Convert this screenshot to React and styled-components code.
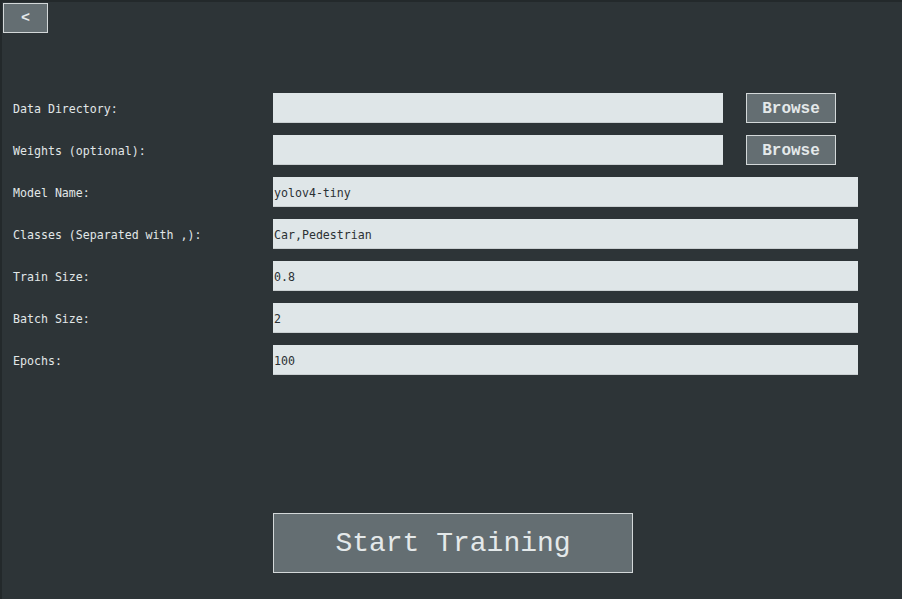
import React from 'react';
import styled, { createGlobalStyle } from 'styled-components';

const GlobalStyle = createGlobalStyle`
  html, body {
    margin: 0;
    padding: 0;
    background: #2d3437;
  }
  * { box-sizing: border-box; }
`;

const Window = styled.div`
  width: 902px;
  height: 599px;
  background: #2d3437;
  border-top: 2px solid #23292b;
  border-left: 2px solid #23292b;
  display: flex;
  flex-direction: column;
  font-family: "DejaVu Sans Mono", "Liberation Mono", monospace;
  overflow: hidden;
`;

const TopBar = styled.div`
  display: flex;
  padding: 1px 0 0 1px;
`;

const BackButton = styled.button`
  width: 45px;
  height: 30px;
  margin: 0;
  padding: 0;
  background: #646e72;
  border: 1px solid #d3d8d9;
  color: #e4e9ea;
  font-family: "Liberation Mono", monospace;
  font-weight: bold;
  font-size: 15px;
  cursor: pointer;
`;

const Form = styled.div`
  display: flex;
  flex-direction: column;
  gap: 12px;
  margin-top: 60px;
  padding-left: 11px;
`;

const Row = styled.div`
  display: flex;
  align-items: center;
  height: 30px;
`;

const Label = styled.label`
  width: 260px;
  padding-top: 2px;
  color: #e2e7e8;
  font-size: 11.6px;
  white-space: nowrap;
`;

const Entry = styled.input`
  width: ${p => p.$width}px;
  height: 30px;
  margin: 0;
  padding: 2px 0 0 1px;
  background: #dfe6e8;
  border: none;
  border-bottom: 1px solid #c9cfd1;
  outline: none;
  color: #2b3134;
  font-family: "DejaVu Sans Mono", "Liberation Mono", monospace;
  font-size: 11.6px;
`;

const BrowseButton = styled.button`
  width: 90px;
  height: 30px;
  margin: 0 0 0 23px;
  padding: 2px 0 0;
  background: #646e72;
  border: 1px solid #d3d8d9;
  color: #e4e9ea;
  font-family: "Liberation Mono", monospace;
  font-weight: bold;
  font-size: 16px;
  cursor: pointer;
`;

const Footer = styled.div`
  display: flex;
  margin-top: 138px;
  padding-left: 271px;
`;

const StartButton = styled.button`
  width: 360px;
  height: 60px;
  margin: 0;
  padding: 0;
  background: #646e72;
  border: 1px solid #d3d8d9;
  color: #e4e9ea;
  font-family: "Liberation Mono", monospace;
  font-size: 28px;
  cursor: pointer;
`;

const fields = [
  { label: 'Data Directory:', value: '', browse: true },
  { label: 'Weights (optional):', value: '', browse: true },
  { label: 'Model Name:', value: 'yolov4-tiny' },
  { label: 'Classes (Separated with ,):', value: 'Car,Pedestrian' },
  { label: 'Train Size:', value: '0.8' },
  { label: 'Batch Size:', value: '2' },
  { label: 'Epochs:', value: '100' },
];

export default function App() {
  return (
    <>
      <GlobalStyle />
      <Window>
        <TopBar>
          <BackButton>&lt;</BackButton>
        </TopBar>
        <Form>
          {fields.map(f => (
            <Row key={f.label}>
              <Label>{f.label}</Label>
              <Entry $width={f.browse ? 450 : 585} defaultValue={f.value} />
              {f.browse && <BrowseButton>Browse</BrowseButton>}
            </Row>
          ))}
        </Form>
        <Footer>
          <StartButton>Start Training</StartButton>
        </Footer>
      </Window>
    </>
  );
}
